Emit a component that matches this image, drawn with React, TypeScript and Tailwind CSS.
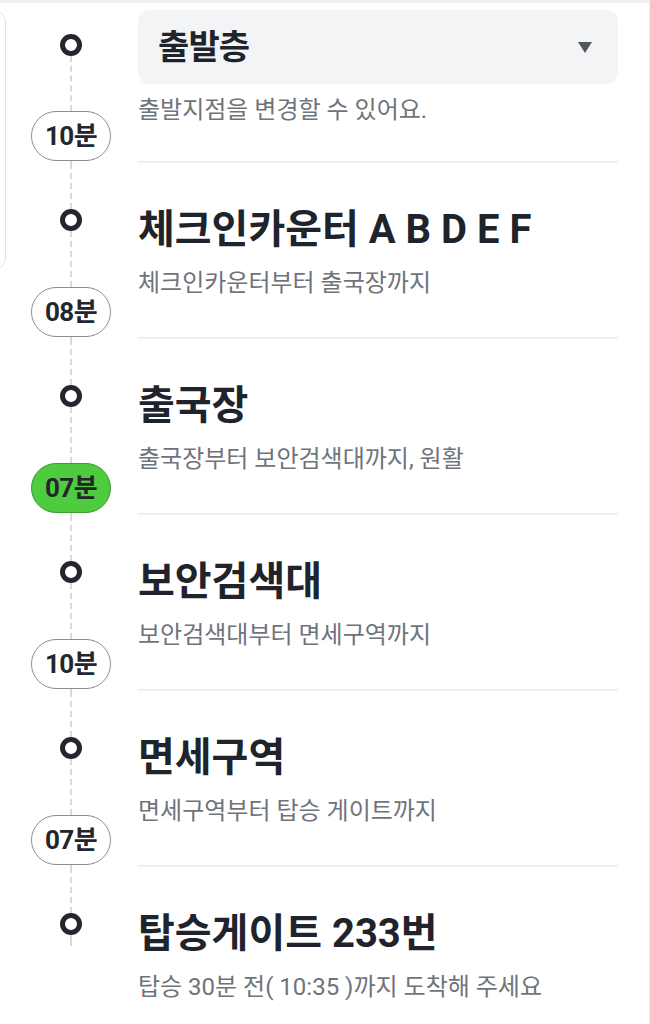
type Step = {
  title: string;
  desc: string;
  time?: string;
  active?: boolean;
};

const steps: Step[] = [
  { title: "출발층", desc: "출발지점을 변경할 수 있어요.", time: "10분" },
  { title: "체크인카운터 A B D E F", desc: "체크인카운터부터 출국장까지", time: "08분" },
  { title: "출국장", desc: "출국장부터 보안검색대까지, 원활", time: "07분", active: true },
  { title: "보안검색대", desc: "보안검색대부터 면세구역까지", time: "10분" },
  { title: "면세구역", desc: "면세구역부터 탑승 게이트까지", time: "07분" },
  { title: "탑승게이트 233번", desc: "탑승 30분 전( 10:35 )까지 도착해 주세요" },
];

const Dash = ({ h }: { h: string }) => (
  <div className={`${h} w-0 border-l-2 border-dashed border-[#d9d9d9] shrink-0`} />
);

const Dot = () => (
  <div className="w-[22px] h-[22px] rounded-full border-[5px] border-[#23262d] bg-white shrink-0" />
);

const Badge = ({ time, active }: { time: string; active?: boolean }) => (
  <div
    className={[
      "w-[80px] h-[50px] rounded-full border flex items-center justify-center shrink-0 text-[26px] font-bold tracking-tight text-[#23262d]",
      active ? "bg-[#4fcb3f] border-[#3b9a2f]" : "bg-white border-[#8a8d92]",
    ].join(" ")}
  >
    {time}
  </div>
);

export default function App() {
  return (
    <div
      className="relative w-[650px] min-h-[1024px] bg-white overflow-hidden border-r border-[#eeeeee]"
      style={{ fontFamily: 'Roboto, "Noto Sans CJK KR", "Noto Sans", sans-serif' }}
    >
      <div className="h-[3px] bg-[#f1f1f1]" />
      {/* edge of the card to the left */}
      <div className="absolute left-[-20px] top-[10px] w-[26px] h-[260px] rounded-xl border border-[#e3e3e3]" />

      {steps.map((s, i) => {
        const first = i === 0;
        const last = i === steps.length - 1;
        return (
          <div key={i} className={`flex ${first ? "h-[160px]" : last ? "h-[157px]" : "h-[176px]"}`}>
            {/* timeline */}
            <div className="w-[138px] pl-[4px] flex flex-col items-center shrink-0">
              {first ? <div className="h-[31px] shrink-0" /> : <Dash h="h-[46px]" />}
              <Dot />
              {s.time ? (
                <>
                  <Dash h={first ? "h-[55px]" : "h-[56px]"} />
                  <Badge time={s.time} active={s.active} />
                  <Dash h="h-[2px]" />
                </>
              ) : (
                <Dash h="h-[11px]" />
              )}
            </div>

            {/* content */}
            <div className={`w-[480px] shrink-0 ${last ? "" : "border-b-2 border-[#f0f0f0]"}`}>
              {first ? (
                <>
                  <div className="mt-[7px] h-[74px] rounded-xl bg-[#f3f4f6] flex items-center justify-between pl-[20px] pr-[26px]">
                    <span className="text-[34px] font-bold text-[#1f232b] tracking-tight">{s.title}</span>
                    <svg width="14" height="11" viewBox="0 0 14 11">
                      <polygon points="0,0 14,0 7,11" fill="#53565c" />
                    </svg>
                  </div>
                  <p className="mt-[11px] text-[24px] leading-[30px] text-[#6f737a]">{s.desc}</p>
                </>
              ) : (
                <div className="pt-[43px]">
                  <h2 className="text-[40px] leading-[48px] font-bold text-[#1f232b]">{s.title}</h2>
                  <p className="mt-[14px] text-[24px] leading-[30px] text-[#6f737a]">{s.desc}</p>
                </div>
              )}
            </div>
          </div>
        );
      })}
    </div>
  );
}
